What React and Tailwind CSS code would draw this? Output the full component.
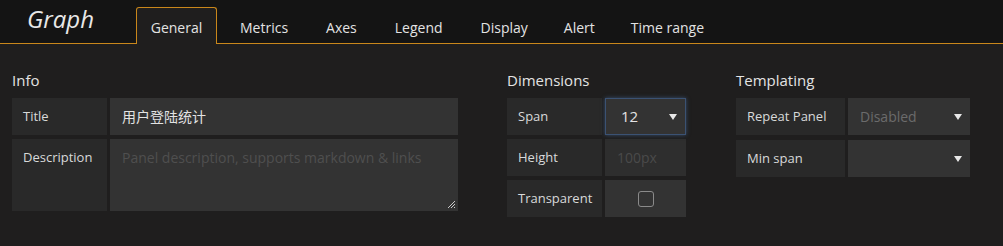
import React from 'react';

const tabs = ['General', 'Metrics', 'Axes', 'Legend', 'Display', 'Alert', 'Time range'];

const Label = ({ children, w = 'w-[95px]', top = false }) => (
    <div className={`${w} shrink-0 bg-[#292929] text-[13px] text-[#d8d9da] pl-[11px] flex ${top ? 'items-start pt-[9px]' : 'items-center'}`}>
        {children}
    </div>
);

const Caret = () => (
    <svg width="8" height="6" viewBox="0 0 8 6" className="absolute right-[8px] top-1/2 -translate-y-1/2">
        <path d="M0 0 L8 0 L4 6 Z" fill="#e8e8e8" />
    </svg>
);

const App = () => {
    return (
        <div className="w-[1003px] h-[246px] bg-[#1f1e1e] font-['Open_Sans','Noto_Sans_CJK_SC',sans-serif] overflow-hidden">
            {/* top bar with tabs */}
            <div className="h-[44px] bg-[#141414] border-b border-[#c9871b] flex items-end">
                <div className="w-[136px] h-full pl-[27px] pt-[3px] text-[24px] italic text-[#e8e8e8] leading-[32px]">Graph</div>
                <div className="flex items-end h-full">
                    {tabs.map((t, i) => (
                        i === 0 ? (
                            <div key={t} className="h-[37px] w-[81px] -mb-px bg-[#1f1e1e] border border-b-0 border-[#c9871b] rounded-t-[3px] flex items-center justify-center text-[14px] text-[#e3e3e3] pt-[3px]">{t}</div>
                        ) : (
                            <div key={t} className={`h-[37px] flex items-center text-[14px] text-[#e3e3e3] pt-[5px] ${i === 1 ? 'ml-[23px]' : i >= 5 ? 'ml-[36px]' : 'ml-[38px]'}`}>{t}</div>
                        )
                    ))}
                </div>
            </div>

            <div className="flex pl-[12px] pt-[27px]">
                {/* Info */}
                <div className="w-[446px]">
                    <div className="text-[15px] text-[#e3e3e3] leading-[18px] mb-[9px]">Info</div>
                    <div className="flex gap-[3px] h-[37px]">
                        <Label>Title</Label>
                        <div className="flex-1 bg-[#333333] flex items-center pl-[12px] text-[14px] text-[#e3e3e3]">用户登陆统计</div>
                    </div>
                    <div className="flex gap-[3px] h-[72px] mt-[4px]">
                        <Label top>Description</Label>
                        <div className="flex-1 bg-[#333333] relative pl-[12px] pt-[8px] text-[14px] text-[#4f4f4f]">
                            Panel description, supports markdown &amp; links
                            <svg width="9" height="9" viewBox="0 0 9 9" className="absolute right-[2px] bottom-[2px]">
                                <path d="M1 8 L8 1 M4 8 L8 4 M7 8 L8 7" stroke="#c8c8c8" strokeWidth="1" />
                            </svg>
                        </div>
                    </div>
                </div>

                {/* Dimensions */}
                <div className="w-[179px] ml-[49px]">
                    <div className="text-[15px] text-[#e3e3e3] leading-[18px] mb-[9px]">Dimensions</div>
                    <div className="flex gap-[3px] h-[37px]">
                        <Label>Span</Label>
                        <div className="flex-1 bg-[#333333] relative flex items-center pl-[15px] text-[15px] text-[#e3e3e3] border border-[#3b5273] shadow-[0_0_4px_rgba(82,128,190,0.5)]">
                            12
                            <Caret />
                        </div>
                    </div>
                    <div className="flex gap-[3px] h-[37px] mt-[4px]">
                        <Label>Height</Label>
                        <div className="flex-1 bg-[#2e2e2e] flex items-center pl-[12px] text-[14px] text-[#4a4a4a]">100px</div>
                    </div>
                    <div className="flex gap-[3px] h-[37px] mt-[4px]">
                        <Label>Transparent</Label>
                        <div className="flex-1 bg-[#333333] flex items-center justify-center">
                            <div className="w-[16px] h-[16px] border border-[#8a8a8a] rounded-[3px]"></div>
                        </div>
                    </div>
                </div>

                {/* Templating */}
                <div className="w-[234px] ml-[50px]">
                    <div className="text-[15px] text-[#e3e3e3] leading-[18px] mb-[9px]">Templating</div>
                    <div className="flex gap-[3px] h-[37px]">
                        <Label w="w-[109px]">Repeat Panel</Label>
                        <div className="flex-1 bg-[#333333] relative flex items-center pl-[12px] text-[14px] text-[#6b6b6b]">
                            Disabled
                            <Caret />
                        </div>
                    </div>
                    <div className="flex gap-[3px] h-[37px] mt-[5px]">
                        <Label w="w-[109px]">Min span</Label>
                        <div className="flex-1 bg-[#333333] relative flex items-center">
                            <Caret />
                        </div>
                    </div>
                </div>
            </div>
        </div>
    );
};

export default App;
